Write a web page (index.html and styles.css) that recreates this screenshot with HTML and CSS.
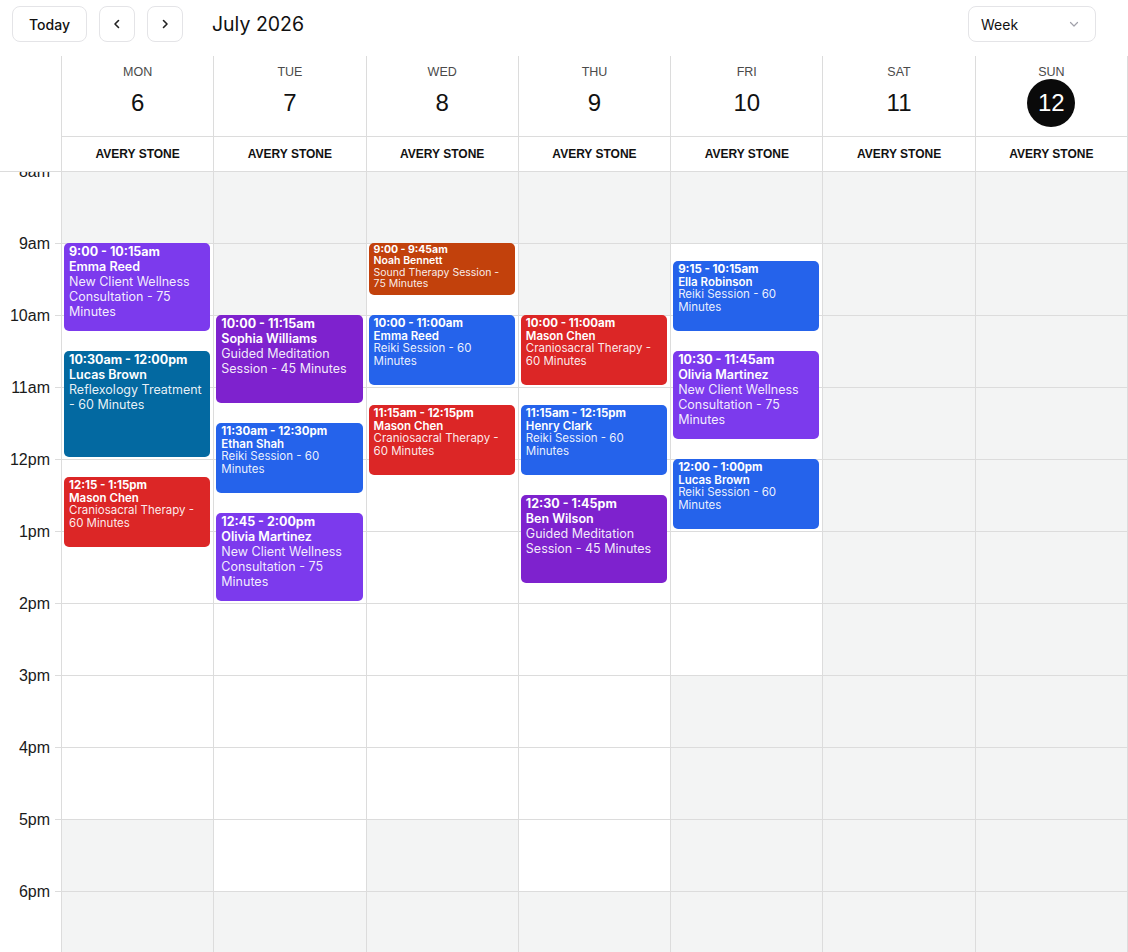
FILE: index.html
```html
<!DOCTYPE html>
<html lang="en">
<head>
    <meta charset="UTF-8">
    <meta name="viewport" content="width=device-width, initial-scale=1.0">
    <title>Schedule</title>
    <link rel="stylesheet" href="styles.css">
</head>
<body>
    <div class="toolbar">
        <button class="btn">Today</button>
        <button class="btn icon-btn" aria-label="Previous week">
            <svg width="16" height="16" viewBox="0 0 16 16"><path d="M9.5 4.5 L6 8 L9.5 11.5" /></svg>
        </button>
        <button class="btn icon-btn" aria-label="Next week">
            <svg width="16" height="16" viewBox="0 0 16 16"><path d="M6.5 4.5 L10 8 L6.5 11.5" /></svg>
        </button>
        <h1 class="title">July 2026</h1>
        <div class="view-select">
            <span>Week</span>
            <svg width="12" height="12" viewBox="0 0 12 12"><path d="M2.5 4.5 L6 8 L9.5 4.5" /></svg>
        </div>
    </div>

    <div class="calendar">
        <div class="cal-head">
            <div class="corner"></div>
            <div class="day-head"><span class="dow">MON</span><span class="dnum">6</span></div>
            <div class="day-head"><span class="dow">TUE</span><span class="dnum">7</span></div>
            <div class="day-head"><span class="dow">WED</span><span class="dnum">8</span></div>
            <div class="day-head"><span class="dow">THU</span><span class="dnum">9</span></div>
            <div class="day-head"><span class="dow">FRI</span><span class="dnum">10</span></div>
            <div class="day-head"><span class="dow">SAT</span><span class="dnum">11</span></div>
            <div class="day-head"><span class="dow">SUN</span><span class="dnum today">12</span></div>

            <div class="corner res"></div>
            <div class="res-cell">AVERY STONE</div>
            <div class="res-cell">AVERY STONE</div>
            <div class="res-cell">AVERY STONE</div>
            <div class="res-cell">AVERY STONE</div>
            <div class="res-cell">AVERY STONE</div>
            <div class="res-cell">AVERY STONE</div>
            <div class="res-cell">AVERY STONE</div>
        </div>
        <div class="cal-body" id="calBody"></div>
    </div>

    <script>
        const firstHour = 8;
        const lastHour = 18;
        const pxPerMin = 1.2;

        // working hours per day, [start, end); null = closed
        const hours = [[9, 17], [10, 18], [9, 17], [10, 18], [9, 15], null, null];

        const events = [
            [0, '9:00', 75, 'violet', '9:00 - 10:15am', 'Emma Reed', 'New Client Wellness Consultation - 75 Minutes'],
            [0, '10:30', 90, 'sky', '10:30am - 12:00pm', 'Lucas Brown', 'Reflexology Treatment - 60 Minutes'],
            [0, '12:15', 60, 'red', '12:15 - 1:15pm', 'Mason Chen', 'Craniosacral Therapy - 60 Minutes'],
            [1, '10:00', 75, 'purple', '10:00 - 11:15am', 'Sophia Williams', 'Guided Meditation Session - 45 Minutes'],
            [1, '11:30', 60, 'blue', '11:30am - 12:30pm', 'Ethan Shah', 'Reiki Session - 60 Minutes'],
            [1, '12:45', 75, 'violet', '12:45 - 2:00pm', 'Olivia Martinez', 'New Client Wellness Consultation - 75 Minutes'],
            [2, '9:00', 45, 'orange', '9:00 - 9:45am', 'Noah Bennett', 'Sound Therapy Session - 75 Minutes'],
            [2, '10:00', 60, 'blue', '10:00 - 11:00am', 'Emma Reed', 'Reiki Session - 60 Minutes'],
            [2, '11:15', 60, 'red', '11:15am - 12:15pm', 'Mason Chen', 'Craniosacral Therapy - 60 Minutes'],
            [3, '10:00', 60, 'red', '10:00 - 11:00am', 'Mason Chen', 'Craniosacral Therapy - 60 Minutes'],
            [3, '11:15', 60, 'blue', '11:15am - 12:15pm', 'Henry Clark', 'Reiki Session - 60 Minutes'],
            [3, '12:30', 75, 'purple', '12:30 - 1:45pm', 'Ben Wilson', 'Guided Meditation Session - 45 Minutes'],
            [4, '9:15', 60, 'blue', '9:15 - 10:15am', 'Ella Robinson', 'Reiki Session - 60 Minutes'],
            [4, '10:30', 75, 'violet', '10:30 - 11:45am', 'Olivia Martinez', 'New Client Wellness Consultation - 75 Minutes'],
            [4, '12:00', 60, 'blue', '12:00 - 1:00pm', 'Lucas Brown', 'Reiki Session - 60 Minutes']
        ];

        function hourLabel(h) {
            if (h === 12) return '12pm';
            return h < 12 ? h + 'am' : (h - 12) + 'pm';
        }

        const body = document.getElementById('calBody');

        const gutter = document.createElement('div');
        gutter.className = 'gutter';
        for (let h = firstHour; h <= lastHour; h++) {
            gutter.innerHTML += `<div class="gutter-cell"><span class="hour-label">${hourLabel(h)}</span></div>`;
        }
        body.appendChild(gutter);

        hours.forEach((open, day) => {
            const col = document.createElement('div');
            col.className = 'day-col';
            for (let h = firstHour; h <= lastHour; h++) {
                const closed = !open || h < open[0] || h >= open[1];
                col.innerHTML += `<div class="slot${closed ? ' closed' : ''}"></div>`;
            }

            events.filter(e => e[0] === day).forEach(e => {
                const [hh, mm] = e[1].split(':').map(Number);
                const start = (hh - firstHour) * 60 + mm;
                const size = e[2] >= 75 ? 'lg' : (e[2] >= 60 ? 'md' : 'sm');
                const ev = document.createElement('div');
                ev.className = `event ${e[3]} ${size}`;
                ev.style.top = (start * pxPerMin - 1) + 'px';
                ev.style.height = (e[2] * pxPerMin - 2) + 'px';
                ev.innerHTML = `
                    <div class="ev-time">${e[4]}</div>
                    <div class="ev-name">${e[5]}</div>
                    <div class="ev-desc">${e[6]}</div>`;
                col.appendChild(ev);
            });

            body.appendChild(col);
        });
    </script>
</body>
</html>
```

FILE: styles.css
```css
* {
    box-sizing: border-box;
}

body {
    margin: 0;
    background-color: #fff;
    color: #111;
    font-family: "Liberation Sans", Arial, sans-serif;
}

/* top bar */

.toolbar {
    display: flex;
    align-items: center;
    gap: 12px;
    height: 48px;
    margin-bottom: 8px;
    padding: 0 32px 0 12px;
    font-family: Inter, "Liberation Sans", sans-serif;
}

.btn {
    height: 36px;
    padding: 0 16px;
    background-color: #fff;
    border: 1px solid #e4e4e7;
    border-radius: 8px;
    font-family: inherit;
    font-size: 14px;
    font-weight: 500;
    color: #111;
    cursor: pointer;
}

.icon-btn {
    width: 36px;
    padding: 0;
    display: flex;
    align-items: center;
    justify-content: center;
}

.icon-btn svg path {
    fill: none;
    stroke: #222;
    stroke-width: 1.6;
    stroke-linecap: round;
    stroke-linejoin: round;
}

.title {
    margin: 0 0 0 17px;
    font-size: 19.5px;
    font-weight: 400;
}

.view-select {
    margin-left: auto;
    width: 128px;
    height: 36px;
    padding: 0 15px 0 12px;
    display: flex;
    align-items: center;
    justify-content: space-between;
    border: 1px solid #e4e4e7;
    border-radius: 8px;
    font-size: 14px;
}

.view-select svg path {
    fill: none;
    stroke: #a1a1aa;
    stroke-width: 1.2;
    stroke-linecap: round;
    stroke-linejoin: round;
}

/* calendar header */

.cal-head,
.cal-body {
    display: grid;
    grid-template-columns: 62px repeat(7, 1fr);
}

.corner {
    border-right: 1px solid #dcdcdc;
}

.corner.res {
    border-bottom: 1px solid #dcdcdc;
}

.day-head {
    height: 81px;
    padding-top: 7px;
    display: flex;
    flex-direction: column;
    align-items: center;
    border-right: 1px solid #dcdcdc;
    border-bottom: 1px solid #dcdcdc;
}

.dow {
    font-size: 12.5px;
    line-height: 18px;
    color: #4a4a4a;
}

.dnum {
    width: 48px;
    height: 48px;
    margin-top: -2px;
    display: flex;
    align-items: center;
    justify-content: center;
    border-radius: 50%;
    font-size: 24px;
    color: #111;
}

.dnum.today {
    background-color: #0a0a0a;
    color: #fff;
}

.res-cell {
    height: 35px;
    display: flex;
    align-items: center;
    justify-content: center;
    border-right: 1px solid #dcdcdc;
    border-bottom: 1px solid #dcdcdc;
    font-size: 12px;
    font-weight: bold;
    color: #111;
}

/* time grid */

.cal-body {
    height: 780px;
    overflow: hidden;
}

.gutter-cell {
    height: 72px;
    display: flex;
    justify-content: flex-end;
    align-items: flex-start;
    padding-right: 11px;
    border-right: 1px solid #dcdcdc;
    background: linear-gradient(#dcdcdc, #dcdcdc) right bottom / 6px 1px no-repeat;
}

.hour-label {
    margin-top: -10px;
    font-size: 16px;
    line-height: 20px;
    color: #1a1a1a;
}

.day-col {
    position: relative;
    border-right: 1px solid #dcdcdc;
}

.slot {
    height: 72px;
    border-bottom: 1px solid #dcdcdc;
}

.slot.closed {
    background-color: #f3f4f4;
}

/* appointments */

.event {
    position: absolute;
    left: 2px;
    right: 3px;
    overflow: hidden;
    padding: 1px 5px;
    border-radius: 5px;
    color: #fff;
    font-family: Inter, "Liberation Sans", sans-serif;
}

.ev-time {
    font-weight: 700;
}

.ev-name {
    font-weight: 600;
}

.ev-desc {
    color: rgba(255, 255, 255, 0.92);
}

.event.lg {
    font-size: 12.5px;
    line-height: 15px;
}

.event.md {
    padding-top: 2px;
    font-size: 11.5px;
    line-height: 12.5px;
}

.event.sm {
    font-size: 10.5px;
    line-height: 11.4px;
}

.violet { background-color: #7c3aed; }
.purple { background-color: #7e22ce; }
.sky { background-color: #0369a1; }
.red { background-color: #dc2626; }
.blue { background-color: #2563eb; }
.orange { background-color: #c2410c; }
```
